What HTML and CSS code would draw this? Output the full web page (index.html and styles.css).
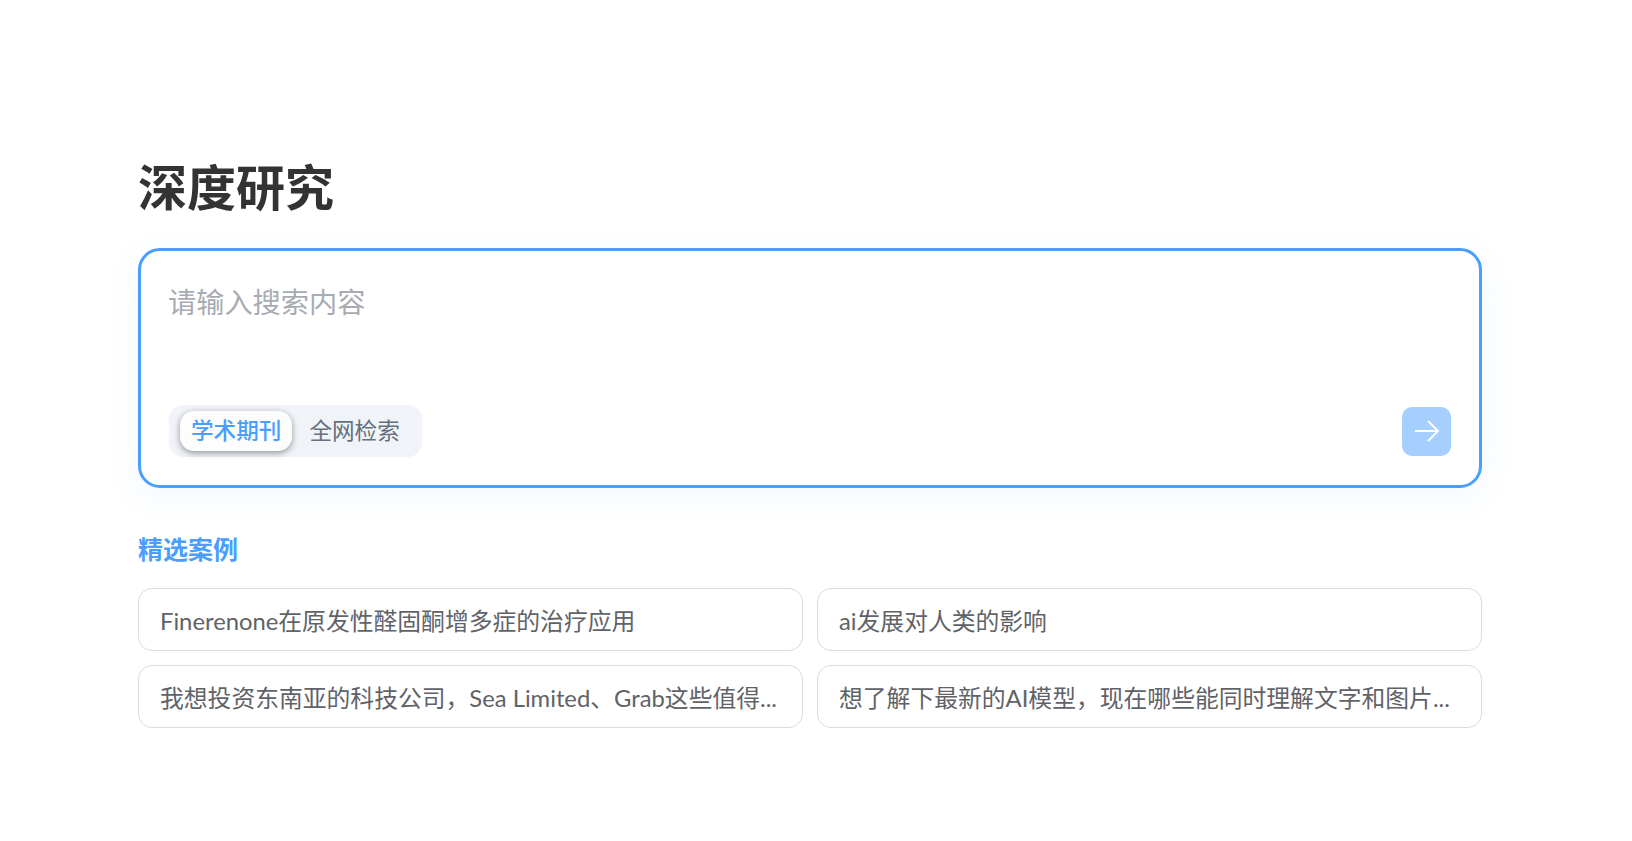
FILE: index.html
```html
<!DOCTYPE html>
<html lang="zh-CN">
<head>
<meta charset="utf-8">
<title>深度研究</title>
<link rel="stylesheet" href="styles.css">
</head>
<body>
<main class="page">
  <h1 class="title">深度研究</h1>
  <section class="search">
    <div class="placeholder">请输入搜索内容</div>
    <div class="search-foot">
      <div class="tabs">
        <span class="tab tab-active">学术期刊</span>
        <span class="tab">全网检索</span>
      </div>
      <button class="send" type="button" aria-label="发送">
        <svg width="24" height="24" viewBox="0 0 24 24" fill="none" stroke="#fff" stroke-width="2" stroke-linecap="round" stroke-linejoin="round"><path d="M0.5 12H23M13.5 2.5L23 12L13.5 21.5"/></svg>
      </button>
    </div>
  </section>
  <h2 class="cases-title">精选案例</h2>
  <div class="cases">
    <div class="case"><span class="case-text">Finerenone在原发性醛固酮增多症的治疗应用</span></div>
    <div class="case"><span class="case-text">ai发展对人类的影响</span></div>
    <div class="case"><span class="case-text">我想投资东南亚的科技公司，Sea Limited、Grab这些值得...</span></div>
    <div class="case"><span class="case-text">想了解下最新的AI模型，现在哪些能同时理解文字和图片...</span></div>
  </div>
</main>
</body>
</html>
```
FILE: styles.css
```css
* { box-sizing: border-box; }
html, body { margin: 0; height: 100%; background: #fff; }
body {
  font-family: Lato, "Noto Sans CJK SC", sans-serif;
  overflow: hidden;
  padding-right: 12px;
}
.page {
  width: 1344px;
  margin: 0 auto;
  padding-top: 150px;
}
.title {
  margin: 0 0 24px;
  height: 74px;
  font-size: 49px;
  line-height: 74px;
  font-weight: 700;
  color: #333;
}
.search {
  height: 240px;
  border: 3px solid #4a9eff;
  border-radius: 22px;
  background: #fff;
  box-shadow: 0 8px 32px rgba(74, 158, 255, 0.08);
  padding: 30px 28px 28px;
  display: flex;
  flex-direction: column;
  justify-content: space-between;
}
.placeholder {
  margin-left: -1px;
  font-size: 28.2px;
  line-height: 42px;
  color: #a8abb2;
}
.search-foot {
  display: flex;
  align-items: center;
  justify-content: space-between;
}
.tabs {
  display: flex;
  align-items: center;
  height: 52px;
  padding: 0 11px;
  border-radius: 14px;
  background: #f0f4f9;
  gap: 6px;
}
.tab {
  height: 40px;
  padding: 0 11px;
  font-size: 22.6px;
  line-height: 40px;
  color: #666f7c;
  border-radius: 14px;
}
.tab-active {
  background: #fdfdfd;
  color: #4a9eff;
  font-weight: 500;
  box-shadow: 0 2px 6px rgba(0, 0, 0, 0.4);
}
.send {
  width: 49px;
  height: 49px;
  padding: 0;
  border: 0;
  border-radius: 10px;
  background: #a4cfff;
  display: flex;
  align-items: center;
  justify-content: center;
}
.cases-title {
  margin: 43px 0 21px;
  font-size: 25px;
  line-height: 36px;
  font-weight: 700;
  color: #4a9eff;
}
.cases {
  display: grid;
  grid-template-columns: 1fr 1fr;
  gap: 14px;
}
.case {
  height: 63px;
  padding: 0 21px;
  border: 1px solid #dcdcdc;
  border-radius: 14px;
  display: flex;
  align-items: center;
  min-width: 0;
}
.case-text {
  white-space: nowrap;
  font-size: 23.8px;
  color: #5f6368;
}
```
